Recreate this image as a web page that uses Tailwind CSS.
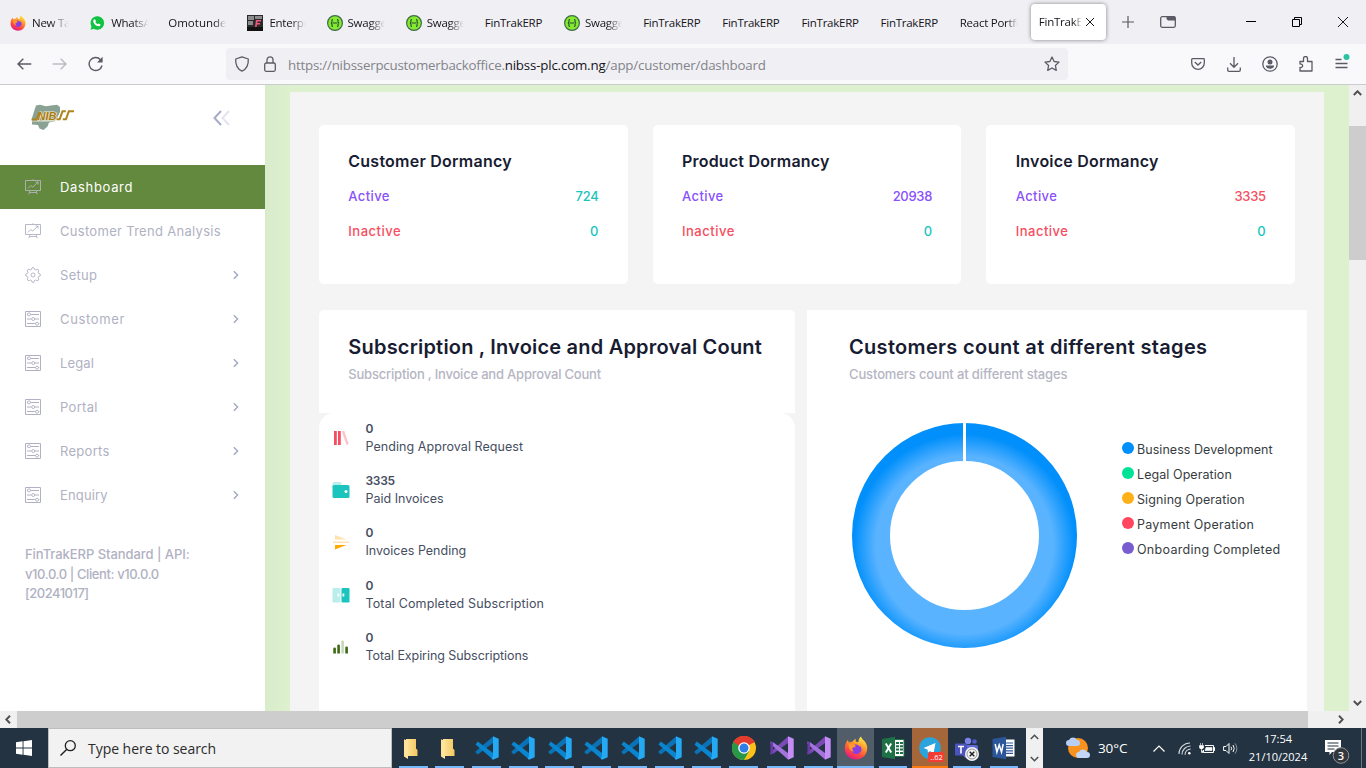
<!DOCTYPE html>
<html lang="en">
<head>
<meta charset="utf-8">
<title>FinTrakERP</title>
<script src="https://cdn.jsdelivr.net/npm/@tailwindcss/browser@4"></script>
</head>
<body class="w-[1366px] h-[768px] overflow-hidden flex flex-col bg-white font-['Open_Sans',sans-serif]">
<svg class="absolute w-0 h-0">
  <defs>
    <linearGradient id="ffg" x1="0.8" y1="0" x2="0.3" y2="1"><stop offset="0" stop-color="#fff44f"/><stop offset=".35" stop-color="#ffa42b"/><stop offset=".7" stop-color="#ff4a3f"/><stop offset="1" stop-color="#e3158a"/></linearGradient>
    <linearGradient id="fold" x1="0" x2="1"><stop offset="0" stop-color="#ffe59c"/><stop offset="1" stop-color="#f3c75f"/></linearGradient>
    <radialGradient id="ring" gradientUnits="userSpaceOnUse" cx="113.500" cy="123" r="111"><stop offset="0.8" stop-color="#59b3ff"/><stop offset="1" stop-color="#008ffb"/></radialGradient>
  </defs>
  <symbol id="firefox" viewBox="0 0 24 24"><path d="M12 23.500C5.500 23.500.8 18.800.8 12.800.8 9 2 6 4 3.800c.1 1.200.4 2 1 2.700 1-.7 2.300-1 3.500-.8C9.500 4 11 3.300 12 3c-.6 1-.6 2.200.4 3h2C14.500 3.500 15.500 1.500 17 .5c.5 3 5 4.500 6 9.500 1.300 7-3.500 13.500-11 13.500z" fill="url(#ffg)"/><path d="M7.300 12c.4-2.500 2.700-4 5.200-3.500 1 .2 1.500 1 2.500 1.200 1.500.3 2.500 1.500 2.500 3.500 0 3-2.500 4.800-5.300 4.800-2.900 0-5.200-2.500-4.900-6z" fill="#8a3de0"/><path d="M4.500 8c2.500-.5 5 .3 7.500 2-1 1.500-2.500 1.500-3.500 1.800-.5 1.500 0 3.200 1.500 4-3.500-.3-5.500-3.500-5.500-7.800z" fill="#ff9a2e"/></symbol>
  <symbol id="swagger" viewBox="0 0 16 16"><circle cx="8" cy="8" r="7.400" fill="#85ea2d" stroke="#3c6b4b" stroke-width="1.200"/><path d="M6 4.500c-1.500 0-1 1-1 2 0 1-.4 1.500-1.200 1.500.8 0 1.200.5 1.200 1.500s-.5 2 1 2M10 4.500c1.500 0 1 1 1 2 0 1 .4 1.500 1.200 1.500-.8 0-1.200.5-1.200 1.500s.5 2-1 2M5.800 8h4.400" fill="none" stroke="#24473c" stroke-width="1.100"/></symbol>
  <symbol id="trend" viewBox="0 0 16 16"><path d="M.5 1.500h15v10H.5zM8 .2v1.300M5 11.500l-1.200 3.800M11 11.500l1.200 3.800M4.500 13.500h7M2.800 9.500l3-3 2 1.600 5-5M10.500 3h2.600v2.600" fill="none" stroke="currentColor" stroke-width=".9"/></symbol>
  <symbol id="gear" viewBox="0 0 16 16"><path d="M6.500 2.500Q6.700.5 8 .5t1.500 2l1.200.5q1.600-1.300 2.600-.3t-.3 2.600l.5 1.200q2 .2 2 1.500t-2 1.500l-.5 1.200q1.300 1.600.3 2.600t-2.600-.3l-1.200.5q-.2 2-1.500 2t-1.500-2l-1.200-.5q-1.600 1.300-2.600.3t.3-2.600l-.5-1.200q-2-.2-2-1.500t2-1.500l.5-1.200Q1.700 3.700 2.700 2.700t2.600.3z" fill="none" stroke="currentColor" stroke-width=".9"/><circle cx="8" cy="8" r="2" fill="none" stroke="currentColor" stroke-width=".9"/></symbol>
  <symbol id="sliders" viewBox="0 0 16 16"><path d="M.5.500h15v15H.5zM2 3.500h1M5.500 3.500h8.500M2 8h4.500M10 8h4M2 12.500h8.500M13.500 12.500h.8" fill="none" stroke="currentColor" stroke-width="1"/><circle cx="4" cy="3.300" r="1.500" fill="none" stroke="currentColor" stroke-width=".9"/><circle cx="8.200" cy="8" r="1.500" fill="none" stroke="currentColor" stroke-width=".9"/><circle cx="12" cy="12.700" r="1.500" fill="none" stroke="currentColor" stroke-width=".9"/></symbol>
  <symbol id="chev" viewBox="0 0 8 10"><path d="M1.800 1.200L5.600 5 1.800 8.800" fill="none" stroke="#a1a8c3" stroke-width="1.400"/></symbol>
  <symbol id="folder" viewBox="0 0 16 22"><path d="M3 1h10v9.500l1.500 1.500v6H3z" fill="url(#fold)"/><path d="M1 1.200L5 3v18L1 18.500z" fill="#ffe49a"/></symbol>
  <symbol id="vscode" viewBox="0 0 24 24"><path d="M18 .5V7L2.800 18.400.5 16.500V15.500z" fill="#0b72b5"/><path d="M.5 8.500L2.800 5.600 18 17v6.500z" fill="#0a86d1"/><path d="M18 .3l5.700 2.500v18.400L18 23.700l-1.300-1L18 20z" fill="#25a9f2"/></symbol>
  <symbol id="vs" viewBox="0 0 24 24"><path d="M18 .5V7L3.500 17.500.5 18.500V16z" fill="#7a4bb5"/><path d="M.5 5.500l3 1L18 17v6.500L.5 8z" fill="#a274dc"/><path d="M.5 5.500L3 6.500v11L.5 18.500z" fill="#6b3aa8"/><path d="M18 .3l5.700 2.500v18.400L18 23.700z" fill="#c48df5"/></symbol>
</svg>

<!-- Tab strip -->
<header class="h-[44px] shrink-0 bg-[#f0eff4] flex items-center text-[11.500px] tracking-[-0.250px] text-[#15141a]">
  <div class="flex h-full pt-px">
    <div class="w-[79.150px] flex items-center pl-[10px]"><svg class="w-4 h-4 shrink-0"><use href="#firefox"/></svg><span class="ml-[6px] w-[37px] overflow-hidden whitespace-nowrap mask-r-from-50%">New Tab</span></div>
    <div class="w-[79.150px] flex items-center pl-[10px]"><svg class="w-4 h-4 shrink-0" viewBox="0 0 16 16"><path d="M.8 15.500l1.200-4A7.200 7.200 0 1 1 4.800 14.300z" fill="#12c143" stroke="#fff" stroke-width=".8"/><path d="M5 4.500l1-.3 1 2-.7.900c.5 1 1.300 1.800 2.400 2.200l.9-.8 1.900.9c0 1.500-1.200 2-2 1.900C6.500 11 4.500 8.500 4.200 6.300c0-.8.3-1.400.8-1.800z" fill="#fff"/></svg><span class="ml-[6px] w-[37px] overflow-hidden whitespace-nowrap mask-r-from-60%">WhatsApp</span></div>
    <div class="w-[79.150px] flex items-center pl-[10px]"><span class="w-[58px] overflow-hidden whitespace-nowrap tracking-[0px] mask-r-from-80%">Omotunde</span></div>
    <div class="w-[79.150px] flex items-center pl-[10px]"><svg class="w-4 h-4 shrink-0" viewBox="0 0 16 16"><path d="M0 0h16v16H0z" fill="#2b2a2b"/><path d="M1 1h6v4H1zM8 1h7v3H8zM1 6h5v4H1z" fill="#8b8a8c"/><path d="M0 12h16v4H0z" fill="#111"/><path d="M8 12l1-7h5v1.500h-3.500l-.2 1.500H13v1.500h-3L9.600 12z" fill="#f2567c"/></svg><span class="ml-[6px] w-[37px] overflow-hidden whitespace-nowrap mask-r-from-60%">Enterprise</span></div>
    <div class="w-[79.150px] flex items-center pl-[10px]"><svg class="w-4 h-4 shrink-0"><use href="#swagger"/></svg><span class="ml-[5px] w-[37px] overflow-hidden whitespace-nowrap mask-r-from-60%">Swagger</span></div>
    <div class="w-[79.150px] flex items-center pl-[10px]"><svg class="w-4 h-4 shrink-0"><use href="#swagger"/></svg><span class="ml-[5px] w-[37px] overflow-hidden whitespace-nowrap mask-r-from-60%">Swagger</span></div>
    <div class="w-[79.150px] flex items-center pl-[10px]"><span>FinTrakERP</span></div>
    <div class="w-[79.150px] flex items-center pl-[10px]"><svg class="w-4 h-4 shrink-0"><use href="#swagger"/></svg><span class="ml-[5px] w-[37px] overflow-hidden whitespace-nowrap mask-r-from-60%">Swagger</span></div>
    <div class="w-[79.150px] flex items-center pl-[10px]"><span>FinTrakERP</span></div>
    <div class="w-[79.150px] flex items-center pl-[10px]"><span>FinTrakERP</span></div>
    <div class="w-[79.150px] flex items-center pl-[10px]"><span>FinTrakERP</span></div>
    <div class="w-[79.150px] flex items-center pl-[10px]"><span>FinTrakERP</span></div>
    <div class="w-[79.150px] flex items-center pl-[10px]"><span class="w-[58px] overflow-hidden whitespace-nowrap mask-r-from-80%">React Portfolio</span></div>
  </div>
  <div class="ml-[2px] w-[75px] h-[36px] rounded bg-white shadow-[0_0_4px_rgba(0,0,0,0.45)] flex items-center pl-2"><span class="w-[43px] overflow-hidden whitespace-nowrap mask-r-from-80%">FinTrakERP</span><svg class="w-[10px] h-[10px] ml-[3px]" viewBox="0 0 10 10"><path d="M1 1l8 8M9 1L1 9" stroke="#15141a"/></svg></div>
  <svg class="w-3 h-3 ml-4" viewBox="0 0 12 12"><path d="M6 0v12M0 6h12" stroke="#5b5b66" stroke-width="1.200"/></svg>
  <svg class="w-4 h-3 ml-[26px]" viewBox="0 0 16 12"><rect x=".7" y=".7" width="14.600" height="10.600" rx="1.500" fill="none" stroke="#5b5b66" stroke-width="1.300"/><path d="M6.500.5H14.500L15.500 2v2.500H8L6.500 3z" fill="#5b5b66"/></svg>
  <svg class="w-[10px] h-[10px] ml-[70px]" viewBox="0 0 10 10"><path d="M0 4.500h10" stroke="#000"/></svg>
  <svg class="w-[10px] h-[10px] ml-[36px]" viewBox="0 0 10 10"><path d="M.5 2.500h7v7h-7zM2.500 2.500v-2h7v7h-2" fill="none" stroke="#000"/></svg>
  <svg class="w-[10px] h-[10px] ml-[36px]" viewBox="0 0 10 10"><path d="M0 0l10 10M10 0L0 10" stroke="#000" stroke-width=".9"/></svg>
</header>

<!-- Toolbar -->
<div class="h-[41px] shrink-0 bg-[#f9f9fb] border-b border-[#ccccce] flex items-center">
  <svg class="w-[15px] h-[12px] ml-[17px]" viewBox="0 0 15 12"><path d="M14.300 6H1M6.300.8L1 6l5.300 5.200" fill="none" stroke="#5b5b66" stroke-width="1.500"/></svg>
  <svg class="w-[15px] h-[12px] ml-[20px]" viewBox="0 0 15 12"><path d="M.7 6H14M8.700.8L14 6l-5.300 5.200" fill="none" stroke="#bcbcc2" stroke-width="1.500"/></svg>
  <svg class="w-[16px] h-[16px] ml-[21px]" viewBox="0 0 16 16"><path d="M14 9.500A6.500 6.500 0 1 1 12.500 3.700" fill="none" stroke="#5b5b66" stroke-width="1.400"/><path d="M14.600.8v5.700H9z" fill="#5b5b66"/></svg>
  <div class="w-[842px] h-[32px] ml-[122px] rounded bg-[#f0f0f4] flex items-center">
    <svg class="w-4 h-4 ml-2" viewBox="0 0 16 16"><path d="M8 .8l6.300 2.200c.3 5.500-1.500 10-6.300 12.200C3.200 13 1.400 8.500 1.700 3z" fill="none" stroke="#5b5b66" stroke-width="1.300" stroke-linejoin="round"/></svg>
    <svg class="w-3 h-4 ml-[14px]" viewBox="0 0 12 16"><rect x=".7" y="7" width="10.600" height="8.300" rx="1.500" fill="none" stroke="#5b5b66" stroke-width="1.300"/><path d="M3 7V3.800a3 3 0 0 1 6 0V7" fill="none" stroke="#5b5b66" stroke-width="1.300"/></svg>
    <div class="ml-[12px] pt-[3px] flex text-[13.300px] tracking-[-0.170px] text-[#83838a] whitespace-nowrap"><span class="tracking-[-0.210px]">https://nibsserpcustomerbackoffice.</span><span class="text-[#15141a]">nibss-plc.com.ng</span><span>/app/customer/dashboard</span></div>
    <svg class="w-4 h-4 ml-auto mr-2" viewBox="0 0 16 16"><path d="M8 1l2.100 4.500 4.900.6-3.600 3.400.9 4.900L8 12l-4.300 2.400.9-4.900L1 6.100l4.900-.6z" fill="none" stroke="#5b5b66" stroke-width="1.300" stroke-linejoin="round"/></svg>
  </div>
  <svg class="w-[14px] h-[12px] ml-[123px]" viewBox="0 0 14 12"><path d="M1.500.7h11q.8 0 .8.800v3.500a6.300 6.300 0 0 1-12.600 0V1.500q0-.8.8-.8z" fill="none" stroke="#5b5b66" stroke-width="1.300"/><path d="M3.800 4L7 7l3.200-3" fill="none" stroke="#5b5b66" stroke-width="1.300"/></svg>
  <svg class="w-[14px] h-[15px] ml-[22px]" viewBox="0 0 14 15"><path d="M7 0v10M3 6.300l4 4 4-4M.7 10.500V13q0 1.300 1.300 1.300h10q1.300 0 1.300-1.300v-2.500" fill="none" stroke="#5b5b66" stroke-width="1.300"/></svg>
  <svg class="w-[16px] h-[16px] ml-[21px]" viewBox="0 0 16 16"><circle cx="8" cy="8" r="7.200" fill="none" stroke="#5b5b66" stroke-width="1.300"/><circle cx="8" cy="6" r="2.500" fill="#5b5b66"/><path d="M3.800 9.500h8.400c0 2-2 3.300-4.200 3.300s-4.200-1.300-4.200-3.300z" fill="#5b5b66"/></svg>
  <svg class="w-[14px] h-[16px] ml-[21px]" viewBox="0 0 14 16"><path d="M1 5.500h3.500V2.500a2 2 0 0 1 4 0v3H13v9.500H1v-3.500c3.500.5 3.500-4 0-3.500z" fill="none" stroke="#5b5b66" stroke-width="1.300" stroke-linejoin="round"/></svg>
  <svg class="w-[15px] h-[20px] ml-[22px]" viewBox="0 0 15 20"><path d="M.5 5.500h6M.5 9.500h12M.5 13.500h12" stroke="#5b5b66" stroke-width="1.300"/><circle cx="11.500" cy="3" r="3" fill="#2ac3a2"/></svg>
</div>

<!-- Page viewport -->
<div class="h-[626px] shrink-0 flex font-[Inter,sans-serif] text-[13px]">
  <aside class="w-[265px] shrink-0 bg-white flex flex-col text-[#b0b1c2]">
    <div class="h-[80px] flex justify-between pl-[31px] pr-[35px]">
      <svg class="w-[44px] h-[27px] mt-[19px]" viewBox="0 0 44 27"><path d="M3.500 6L5 1.500 9 .8l6 1.500L20 1.500 26 .8 29 3v5l-3 6-3 3.500-5 1-1.500 4L12.500 26l-4-1.500L7 21 1 20.500V14z" fill="#89a294"/><path d="M1 17h24" stroke="#e8e4d0"/><text x="6.500" y="15.800" font-family="Liberation Sans" font-size="11" font-weight="700" font-style="italic" fill="#a87a10" stroke="#f5efd8" stroke-width="1.200" paint-order="stroke" textLength="19" lengthAdjust="spacingAndGlyphs">NIB</text><path d="M.5 15.500h5L8.500 7.500M25.500 15.200h3.200L31.500 7.300H34.800M31.800 15.200h3.200L37.800 7.300H43" fill="none" stroke="#b0841c" stroke-width="2"/></svg>
      <svg class="w-[17px] h-[16px] mt-[25px]" viewBox="0 0 17 16"><path d="M8 1L1.500 8 8 15" fill="none" stroke="#a6abca" stroke-width="2"/><path d="M16 1L9.500 8l6.500 7" fill="none" stroke="#e3e4ee" stroke-width="2"/></svg>
    </div>
    <nav class="flex flex-col">
      <a class="h-[44px] bg-[#62893d] text-white flex items-center pl-[25px]"><svg class="w-4 h-4 text-[#b3b7ba]"><use href="#trend"/></svg><span class="ml-[19px] pt-[2px] tracking-[0.670px]">Dashboard</span></a>
      <a class="h-[44px] flex items-center pl-[25px]"><svg class="w-4 h-4"><use href="#trend"/></svg><span class="ml-[19px] pt-[2px] tracking-[0.300px]">Customer Trend Analysis</span></a>
      <a class="h-[44px] flex items-center pl-[25px] pr-[25px]"><svg class="w-4 h-4"><use href="#gear"/></svg><span class="ml-[19px] pt-[2px] tracking-[0.300px]">Setup</span><svg class="w-2 h-[10px] ml-auto"><use href="#chev"/></svg></a>
      <a class="h-[44px] flex items-center pl-[25px] pr-[25px]"><svg class="w-4 h-4"><use href="#sliders"/></svg><span class="ml-[19px] pt-[2px] tracking-[0.650px]">Customer</span><svg class="w-2 h-[10px] ml-auto"><use href="#chev"/></svg></a>
      <a class="h-[44px] flex items-center pl-[25px] pr-[25px]"><svg class="w-4 h-4"><use href="#sliders"/></svg><span class="ml-[19px] pt-[2px] tracking-[0.150px]">Legal</span><svg class="w-2 h-[10px] ml-auto"><use href="#chev"/></svg></a>
      <a class="h-[44px] flex items-center pl-[25px] pr-[25px]"><svg class="w-4 h-4"><use href="#sliders"/></svg><span class="ml-[19px] pt-[2px] tracking-[0.300px]">Portal</span><svg class="w-2 h-[10px] ml-auto"><use href="#chev"/></svg></a>
      <a class="h-[44px] flex items-center pl-[25px] pr-[25px]"><svg class="w-4 h-4"><use href="#sliders"/></svg><span class="ml-[19px] pt-[2px] tracking-[0.300px]">Reports</span><svg class="w-2 h-[10px] ml-auto"><use href="#chev"/></svg></a>
      <a class="h-[44px] flex items-center pl-[25px] pr-[25px]"><svg class="w-4 h-4"><use href="#sliders"/></svg><span class="ml-[19px] pt-[2px] tracking-[0.150px]">Enquiry</span><svg class="w-2 h-[10px] ml-auto"><use href="#chev"/></svg></a>
    </nav>
    <div class="mt-[28px] pl-[25px] flex flex-col items-start font-medium leading-[19.500px]"><span class="tracking-[-0.060px]">FinTrakERP Standard | API:</span><span class="tracking-[-0.400px]">v10.0.0 | Client: v10.0.0</span><span class="tracking-[-0.500px]">[20241017]</span></div>
  </aside>
  <main class="w-[1084px] shrink-0 bg-[#def1ce] bg-linear-to-r from-[#d8ebcb] to-[#def1ce] to-[25px] pl-[25px] pt-[7px] flex items-start overflow-hidden">
    <div class="w-[1034px] h-[619px] bg-[#f4f4f4] pl-[29px] pt-[33px] flex flex-col">
      <div class="flex gap-[25px] font-medium">
        <section class="w-[308.700px] h-[159px] bg-white rounded-[5px] px-[29.300px] pt-[24px]">
          <h3 class="text-[16px] leading-6 font-semibold text-[#181c32] tracking-[0.240px]">Customer Dormancy</h3>
          <div class="mt-[14px] h-5 flex items-center justify-between"><span class="text-[#8950fc] tracking-[0.400px]">Active</span><span class="text-[#1bc5bd] tracking-[-0.300px]">724</span></div>
          <div class="mt-[15px] h-5 flex items-center justify-between"><span class="text-[#f64e60] tracking-[0.500px]">Inactive</span><span class="text-[#1bc5bd]">0</span></div>
        </section>
        <section class="w-[308.700px] h-[159px] bg-white rounded-[5px] px-[29.300px] pt-[24px]">
          <h3 class="text-[16px] leading-6 font-semibold text-[#181c32] tracking-[0.200px]">Product Dormancy</h3>
          <div class="mt-[14px] h-5 flex items-center justify-between"><span class="text-[#8950fc] tracking-[0.400px]">Active</span><span class="text-[#8950fc] tracking-[-0.300px]">20938</span></div>
          <div class="mt-[15px] h-5 flex items-center justify-between"><span class="text-[#f64e60] tracking-[0.500px]">Inactive</span><span class="text-[#1bc5bd]">0</span></div>
        </section>
        <section class="w-[308.700px] h-[159px] bg-white rounded-[5px] px-[29.300px] pt-[24px]">
          <h3 class="text-[16px] leading-6 font-semibold text-[#181c32] tracking-[0.220px]">Invoice Dormancy</h3>
          <div class="mt-[14px] h-5 flex items-center justify-between"><span class="text-[#8950fc] tracking-[0.400px]">Active</span><span class="text-[#f64e60] tracking-[-0.300px]">3335</span></div>
          <div class="mt-[15px] h-5 flex items-center justify-between"><span class="text-[#f64e60] tracking-[0.500px]">Inactive</span><span class="text-[#1bc5bd]">0</span></div>
        </section>
      </div>
      <div class="mt-[26px] flex gap-3">
        <section class="w-[476px] h-[401px] flex flex-col">
          <div class="h-[103px] bg-white rounded-t-[5px] pl-[29.300px] pt-[22px]">
            <h2 class="text-[20px] leading-[30px] font-semibold text-[#181c32] whitespace-nowrap tracking-[0.200px]">Subscription , Invoice and Approval Count</h2>
            <p class="mt-[2px] leading-5 font-medium text-[#b5b5c3] tracking-[-0.200px]">Subscription , Invoice and Approval Count</p>
          </div>
          <div class="flex-1 bg-white rounded-t-[15px] pt-[7px] pl-[13px] flex flex-col gap-[16.200px] text-[12.500px] leading-[18px] text-[#464e5f]">
            <div class="flex items-center"><svg class="w-[18px] h-[18px]" viewBox="0 0 18 18"><path d="M2 2h2.800v14H2zM6 2h2.800v14H6z" fill="#f64e60"/><path d="M9.800 2.600l2.300-.8L16.800 15l-2.300.9z" fill="#fbc4ca"/></svg><div class="ml-[15.500px] flex flex-col items-start"><b class="font-semibold text-[12px]">0</b><span class="tracking-[0.060px]">Pending Approval Request</span></div></div>
            <div class="flex items-center"><svg class="w-[18px] h-[18px]" viewBox="0 0 18 18"><rect x=".5" y="1" width="9" height="6" rx="1.500" fill="#bbeeeb"/><rect x=".5" y="4" width="17" height="13" rx="1.500" fill="#1bc5bd"/><circle cx="14" cy="10.500" r="1.500" fill="#fff"/></svg><div class="ml-[15.500px] flex flex-col items-start"><b class="font-semibold text-[12px] tracking-[-0.300px]">3335</b><span>Paid Invoices</span></div></div>
            <div class="flex items-center"><svg class="w-[18px] h-[18px]" viewBox="0 0 18 18"><path d="M3 2l11.500 4.500H3zM1 8.500h16V10H1z" fill="#ffe3ae"/><path d="M3 12h11.500L3 16.500z" fill="#ffa800"/></svg><div class="ml-[15.500px] flex flex-col items-start"><b class="font-semibold text-[12px]">0</b><span>Invoices Pending</span></div></div>
            <div class="flex items-center"><svg class="w-[18px] h-[18px]" viewBox="0 0 18 18"><rect x=".5" y="2" width="8" height="14.500" rx="1.200" fill="#bbeeeb"/><rect x="9.500" y="2" width="8" height="14.500" rx="1.200" fill="#1bc5bd"/><path d="M5.500 7.500h1.800v3H5.500zM10.500 7.500h1.800v3h-1.800z" fill="#fff"/></svg><div class="ml-[15.500px] flex flex-col items-start"><b class="font-semibold text-[12px]">0</b><span class="tracking-[0.140px]">Total Completed Subscription</span></div></div>
            <div class="flex items-center"><svg class="w-[18px] h-[18px]" viewBox="0 0 18 18"><path d="M1.300 10.500q0-1 1.300-1t1.300 1v5H1.300zM5.300 7.500q0-1 1.300-1t1.300 1v8H5.300zM13.300 9.500q0-1 1.300-1t1.300 1v6h-2.600z" fill="#3b6a12"/><path d="M9.300 3.500q0-1 1.300-1t1.300 1v12H9.300z" fill="#c9d6bb"/></svg><div class="ml-[15.500px] flex flex-col items-start"><b class="font-semibold text-[12px]">0</b><span class="tracking-[-0.070px]">Total Expiring Subscriptions</span></div></div>
          </div>
        </section>
        <section class="w-[500px] h-[401px] shrink-0 bg-white pt-[22px]">
          <div class="pl-[42px]">
            <h2 class="text-[20px] leading-[30px] font-semibold text-[#181c32] whitespace-nowrap tracking-[0.320px]">Customers count at different stages</h2>
            <p class="mt-[2px] leading-5 font-medium text-[#b5b5c3] tracking-[-0.130px]">Customers count at different stages</p>
          </div>
          <div class="mt-[38px] pl-[44px] flex">
            <svg class="w-[227px] h-[227px]" viewBox="0 0 227 227"><circle cx="113.500" cy="113.500" r="93.500" fill="none" stroke="url(#ring)" stroke-width="38"/><path d="M113.500 0v40" stroke="#fff" stroke-width="3"/></svg>
            <ul class="ml-[44px] mt-[15px] flex flex-col text-[12.500px] leading-[25px] text-[#373d3f] whitespace-nowrap">
              <li class="flex items-center"><i class="w-3 h-3 mb-1 mr-[3px] rounded-full bg-[#008ffb]"></i><span class="tracking-[0.050px]">Business Development</span></li>
              <li class="flex items-center"><i class="w-3 h-3 mb-1 mr-[3px] rounded-full bg-[#00e396]"></i><span class="tracking-[0.070px]">Legal Operation</span></li>
              <li class="flex items-center"><i class="w-3 h-3 mb-1 mr-[3px] rounded-full bg-[#feb019]"></i><span class="tracking-[0.100px]">Signing Operation</span></li>
              <li class="flex items-center"><i class="w-3 h-3 mb-1 mr-[3px] rounded-full bg-[#ff4560]"></i><span class="tracking-[0.220px]">Payment Operation</span></li>
              <li class="flex items-center"><i class="w-3 h-3 mb-1 mr-[3px] rounded-full bg-[#775dd0]"></i><span class="tracking-[0.300px]">Onboarding Completed</span></li>
            </ul>
          </div>
        </section>
      </div>
    </div>
  </main>
  <div class="w-[17px] bg-[#f0f0f0] flex flex-col items-center">
    <svg class="w-[9px] h-[6px] mt-[5px]" viewBox="0 0 9 6"><path d="M.8 5l3.700-3.700L8.200 5" fill="none" stroke="#505050" stroke-width="2"/></svg>
    <div class="w-full h-[134px] mt-[30px] bg-[#cdcdcd]"></div>
    <svg class="w-[9px] h-[6px] mt-auto mb-[5px]" viewBox="0 0 9 6"><path d="M.8 1l3.700 3.700L8.200 1" fill="none" stroke="#505050" stroke-width="2"/></svg>
  </div>
</div>

<!-- Horizontal scrollbar -->
<div class="h-[17px] shrink-0 bg-[#f0f0f0] flex items-center">
  <svg class="w-[6px] h-[9px] ml-[5px]" viewBox="0 0 6 9"><path d="M5 .8L1.300 4.500 5 8.200" fill="none" stroke="#505050" stroke-width="2"/></svg>
  <div class="w-[1291px] h-full ml-[6px] bg-[#cdcdcd]"></div>
  <svg class="w-[6px] h-[9px] ml-[30px]" viewBox="0 0 6 9"><path d="M1 .8l3.700 3.700L1 8.200" fill="none" stroke="#505050" stroke-width="2"/></svg>
</div>

<!-- Taskbar -->
<footer class="h-[40px] shrink-0 bg-[#233342] flex text-white">
  <div class="w-[48px] flex items-center justify-center"><svg class="w-4 h-4" viewBox="0 0 16 16"><path d="M0 2.200L6.600 1.300V7.500H0zM7.500 1.200L16 0v7.500H7.500zM0 8.500h6.600v6.200L0 13.800zM7.500 8.500H16V16l-8.500-1.200z" fill="#fff"/></svg></div>
  <div class="w-[344px] bg-[#f2f2f2] border border-[#bdbdbd] flex items-center text-[#2b2b2b] text-[14px]"><svg class="w-4 h-4 ml-[11px]" viewBox="0 0 16 16"><circle cx="10.300" cy="5.700" r="5" fill="none" stroke="#1f1f1f" stroke-width="1.300"/><path d="M6.600 9.400L.5 15.500" stroke="#1f1f1f" stroke-width="1.400"/></svg><span class="ml-[12px] pt-px tracking-[-0.040px]">Type here to search</span></div>
  <div class="ml-[3px] flex">
    <div class="w-[36.620px] flex flex-col items-center"><svg class="w-4 h-[22px] mt-[10px] mr-[4px]"><use href="#folder"/></svg><i class="w-[29px] h-[2px] mt-auto bg-[#76b9ff]"></i></div>
    <div class="w-[36.620px] flex flex-col items-center"><svg class="w-4 h-[22px] mt-[10px] mr-[4px]"><use href="#folder"/></svg><i class="w-[29px] h-[2px] mt-auto bg-[#76b9ff]"></i></div>
    <div class="w-[36.620px] flex flex-col items-center"><svg class="w-6 h-6 mt-2"><use href="#vscode"/></svg><i class="w-[29px] h-[2px] mt-auto bg-[#76b9ff]"></i></div>
    <div class="w-[36.620px] flex flex-col items-center"><svg class="w-6 h-6 mt-2"><use href="#vscode"/></svg><i class="w-[29px] h-[2px] mt-auto bg-[#76b9ff]"></i></div>
    <div class="w-[36.620px] flex flex-col items-center"><svg class="w-6 h-6 mt-2"><use href="#vscode"/></svg><i class="w-[29px] h-[2px] mt-auto bg-[#76b9ff]"></i></div>
    <div class="w-[36.620px] flex flex-col items-center"><svg class="w-6 h-6 mt-2"><use href="#vscode"/></svg><i class="w-[29px] h-[2px] mt-auto bg-[#76b9ff]"></i></div>
    <div class="w-[36.620px] flex flex-col items-center"><svg class="w-6 h-6 mt-2"><use href="#vscode"/></svg><i class="w-[29px] h-[2px] mt-auto bg-[#76b9ff]"></i></div>
    <div class="w-[36.620px] flex flex-col items-center"><svg class="w-6 h-6 mt-2"><use href="#vscode"/></svg><i class="w-[29px] h-[2px] mt-auto bg-[#76b9ff]"></i></div>
    <div class="w-[36.620px] flex flex-col items-center"><svg class="w-6 h-6 mt-2"><use href="#vscode"/></svg><i class="w-[29px] h-[2px] mt-auto bg-[#76b9ff]"></i></div>
    <div class="w-[39px] flex flex-col items-center"><svg class="w-6 h-6 mt-2" viewBox="0 0 24 24"><circle cx="12" cy="12" r="12" fill="#fbc116"/><path d="M12 12L1.600 6A12 12 0 0 1 22.400 6z" fill="#e33b2e"/><path d="M1.600 6A12 12 0 0 0 12 24l5.200-9L12 12z" fill="#279847"/><path d="M1.600 6L7 15l5-3V6z" fill="#279847"/><path d="M12 6.500h10.600A12 12 0 0 0 1.600 6L7 10z" fill="#e33b2e"/><circle cx="12" cy="12" r="5.800" fill="#fff"/><circle cx="12" cy="12" r="4.500" fill="#2f7de9"/></svg><i class="w-[29px] h-[2px] mt-auto bg-[#76b9ff]"></i></div>
    <div class="w-[37px] flex flex-col items-center"><svg class="w-6 h-6 mt-2"><use href="#vs"/></svg><i class="w-[29px] h-[2px] mt-auto bg-[#76b9ff]"></i></div>
    <div class="w-[37px] flex flex-col items-center"><svg class="w-6 h-6 mt-2"><use href="#vs"/></svg><i class="w-[29px] h-[2px] mt-auto bg-[#76b9ff]"></i></div>
    <div class="w-[37px] bg-[#515d69] flex flex-col items-center"><svg class="w-6 h-6 mt-2"><use href="#firefox"/></svg><i class="w-full h-[2px] mt-auto bg-[#76b9ff]"></i></div>
    <div class="w-[38px] flex flex-col items-center"><svg class="w-6 h-6 mt-2" viewBox="0 0 24 24"><path d="M12 3.500h11v17H12z" fill="#fff" stroke="#1e7145"/><path d="M15 6h3v2h-3zM19 6h3v2h-3zM15 9.300h3v2h-3zM19 9.300h3v2h-3zM15 12.600h3v2h-3zM19 12.600h3v2h-3zM15 16h3v2h-3zM19 16h3v2h-3z" fill="#1e7145"/><path d="M1 3L14 .8v22.400L1 21z" fill="#1e7145"/><path d="M4.800 7.500l5.400 9M10.200 7.500l-5.400 9" stroke="#fff" stroke-width="1.900"/></svg><i class="w-[28px] h-[2px] mt-auto bg-[#76b9ff]"></i></div>
    <div class="w-[36px] bg-[#a5673a] flex flex-col items-center relative"><svg class="w-[22px] h-[22px] mt-[9px]" viewBox="0 0 22 22"><circle cx="11" cy="11" r="10.800" fill="#2ba3dc"/><path d="M4.500 11L16.500 6l-2 10.500-3.500-2.500-2 1.800-.5-3.300z" fill="#fff"/></svg><span class="absolute left-[16px] top-[24px] w-[16px] h-[10px] rounded-[2px] bg-[#f23c34] text-[7.500px] leading-[10px] text-center">..62</span><i class="w-full h-[2px] mt-auto bg-[#ff7a0f]"></i></div>
    <div class="w-[37px] flex flex-col items-center"><svg class="w-6 h-6 mt-[9px]" viewBox="0 0 24 24"><circle cx="13" cy="4" r="3.200" fill="#7b83eb"/><circle cx="19.500" cy="4.500" r="2.300" fill="#5059c9"/><path d="M7 8h14q2 0 2 2v6q-2 6-9 6-6-1-7-6z" fill="#6169d8"/><rect x="0" y="6.500" width="12" height="12" rx="1" fill="#4b53bc"/><path d="M3 9.500h6M6 9.500v7" stroke="#fff" stroke-width="1.600"/><circle cx="17" cy="17" r="7" fill="#f4f4f4"/><circle cx="17" cy="17" r="5" fill="none" stroke="#555" stroke-width=".6"/><path d="M14.700 14.700l4.600 4.600M19.300 14.700l-4.600 4.600" stroke="#222" stroke-width="1.500"/></svg><i class="w-[28px] h-[2px] mt-auto bg-[#76b9ff]"></i></div>
    <div class="w-[37px] flex flex-col items-center"><svg class="w-6 h-6 mt-2" viewBox="0 0 24 24"><path d="M13 3.500h9.500v17H13z" fill="#fff"/><path d="M14 7h7M14 9.600h7M14 12.200h7M14 14.800h7M14 17.400h7" stroke="#2b579a" stroke-width="1.200"/><path d="M.5 3L14 .8v22.400L.5 21z" fill="#2b579a"/><path d="M3.200 8l1.700 8L7.200 9l2.300 7 1.700-8" fill="none" stroke="#fff" stroke-width="1.500"/></svg><i class="w-[28px] h-[2px] mt-auto bg-[#76b9ff]"></i></div>
  </div>
  <div class="ml-auto w-[17px] bg-[#f0f0f0] flex flex-col items-center justify-between py-[6px]"><svg class="w-[9px] h-[6px]" viewBox="0 0 9 6"><path d="M.8 5l3.700-3.700L8.200 5" fill="none" stroke="#505050" stroke-width="1.600"/></svg><svg class="w-[9px] h-[6px]" viewBox="0 0 9 6"><path d="M.8 1l3.700 3.700L8.200 1" fill="none" stroke="#505050" stroke-width="1.600"/></svg></div>
  <div class="w-[323px] flex items-center">
    <svg class="w-[26px] h-[24px] ml-[22px]" viewBox="0 0 26 24"><circle cx="13" cy="12" r="10" fill="#f9921e"/><path d="M4 10a3 3 0 0 1 0-6 4.500 4.500 0 0 1 8 0 3 3 0 0 1 0 6z" fill="#b8cff5"/><path d="M14 22a3 3 0 0 1 0-6 4.500 4.500 0 0 1 8 0 3 3 0 0 1 0 6z" fill="#c3d7f8"/></svg>
    <span class="ml-[7px] w-[30px] text-[13.500px] tracking-[-0.100px]">30°C</span>
    <svg class="w-3 h-[7px] ml-[25px]" viewBox="0 0 12 7"><path d="M.5 6.500L6 1l5.500 5.500" fill="none" stroke="#fff" stroke-width="1.200"/></svg>
    <svg class="w-[13px] h-[13px] ml-[13px]" viewBox="0 0 13 13"><path d="M1 12A11 11 0 0 1 12 1M4 12.500A8.500 8.500 0 0 1 12.500 4M7 12.700A6 6 0 0 1 12.700 7" fill="none" stroke="#d5dade" stroke-width="1.100"/><circle cx="11.300" cy="11.300" r="1.300" fill="#fff"/></svg>
    <svg class="w-4 h-[11px] ml-2" viewBox="0 0 16 11"><path d="M6 2.500h8.500v7h-10V7" fill="none" stroke="#fff"/><path d="M7 4.500h6v3H6zM14.500 4.500H16v3h-1.500zM.5 2.500h4V5q-2 2-4 0zM1.500 0v2.500M3.500 0v2.500M2.500 6v3.500h2" fill="#fff" stroke="#fff" stroke-width=".6"/></svg>
    <svg class="w-[16px] h-[13px] ml-2" viewBox="0 0 16 13"><path d="M.6 4.500H3L6 1.500v10l-3-3H.6zM8 4.800q1.200 1.700 0 3.400M10 3q2.500 3.500 0 7" fill="none" stroke="#fff"/><path d="M12 1.300q3.800 5.200 0 10.400" fill="none" stroke="#8b959e"/></svg>
    <div class="w-[58px] ml-[10px] flex flex-col items-center text-[11px] leading-[18px]"><span class="-mt-px">17:54</span><span>21/10/2024</span></div>
    <svg class="w-[26px] h-[26px] ml-[17px] mt-[5px]" viewBox="0 0 26 26"><path d="M1 2h16v12H8l-2.500 3V14H1z" fill="#fff"/><path d="M3.500 5h11M3.500 8h11M3.500 11h7" stroke="#233342" stroke-width="1.200"/><circle cx="17" cy="17.500" r="7.800" fill="#33373b" stroke="#8b9197"/><text x="17" y="21.500" font-family="Open Sans" font-size="11" font-weight="600" text-anchor="middle" fill="#fff">3</text></svg>
    <i class="ml-auto mr-[4px] w-px h-full bg-[#6a7580]"></i>
  </div>
</footer>
</body>
</html>
